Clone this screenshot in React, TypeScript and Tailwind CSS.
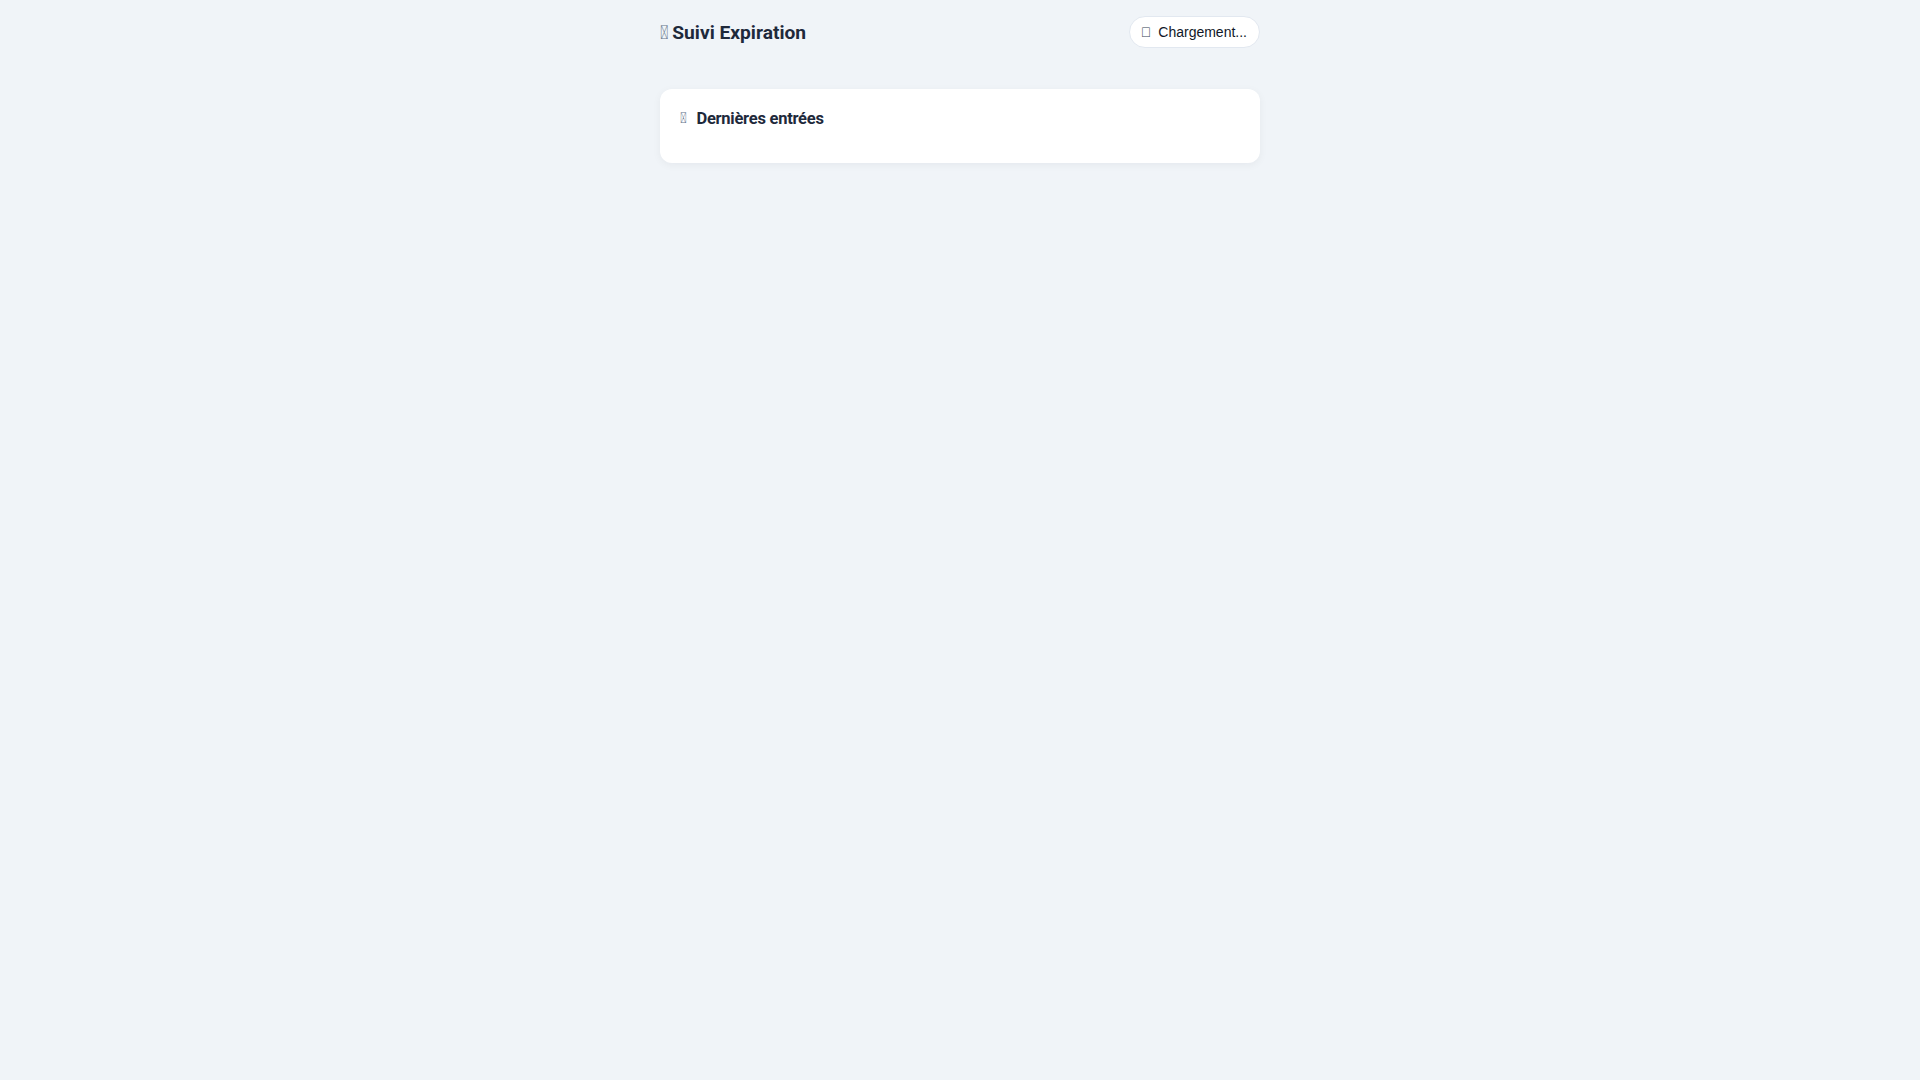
import React from 'react';

const Glyph: React.FC<{className?: string}> = ({className}) => (
  <span className={className}>{'\uf1da'}</span>
);

const App: React.FC = () => {
  return (
    <div className="min-h-screen bg-[#f0f4f8] font-['Roboto',sans-serif]">
      <div className="max-w-[600px] mx-auto pt-4">
        <header className="flex items-center justify-between mb-[41px]">
          <h1 className="text-[19.2px] leading-[23px] font-bold text-[#1e293b]">
            <Glyph className="text-[#64748b] font-normal mr-[-1px]" /> Suivi Expiration
          </h1>
          <div className="flex items-center h-8 pl-[11px] pr-3 rounded-full bg-white border border-[#e2e8f0] font-['Liberation_Sans',Arial,sans-serif] text-[14px] text-[#111827]">
            <Glyph className="text-[#334155] mr-[7px]" />
            <span>Chargement...</span>
          </div>
        </header>

        <section className="bg-white rounded-xl shadow-[0_2px_8px_rgba(15,23,42,0.05)] px-5 pt-[19px] pb-5">
          <h2 className="text-[16.5px] leading-[21px] tracking-[-0.25px] font-bold text-[#1e293b] mb-[14px] flex items-center">
            <Glyph className="text-[#64748b] font-normal text-[15px] mr-[10px]" />
            Dernières entrées
          </h2>
          <div></div>
        </section>
      </div>
    </div>
  );
};

export default App;
